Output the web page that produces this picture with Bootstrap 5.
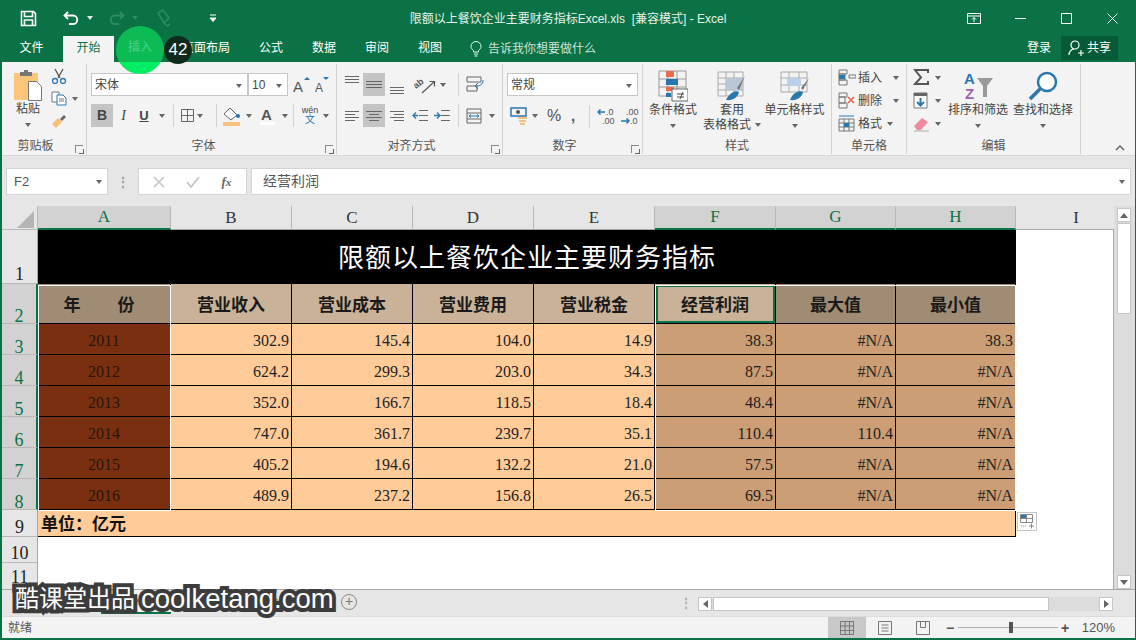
<!DOCTYPE html>
<html lang="zh">
<head>
<meta charset="utf-8">
<title>限额以上餐饮企业主要财务指标Excel.xls - Excel</title>
<link href="https://cdn.jsdelivr.net/npm/bootstrap@5.3.0/dist/css/bootstrap.min.css" rel="stylesheet">
<style>
html, body { height: 640px; overflow: hidden; }
body { font-family: "Liberation Sans", "Noto Sans CJK SC", sans-serif; font-size: 12px; color: #444; background: #e6e6e6; }
.xl-win { width: 1136px; height: 640px; position: relative; border: solid #0a7245; border-width: 0 1px 2px 2px; overflow: hidden; }

/* title bar */
.xl-title { height: 36px; background: #0a7245; color: #e8f3ec; padding-left: 18px; }
.xl-title-text { position: absolute; left: 0; right: 0; top: 10px; text-align: center; line-height: 18px; padding-right: 1px; }
.xl-q-undo { margin-left: 26px; }
.xl-q-caret { margin-left: 7px; }
.xl-q-redo { margin-left: 15px; }
.xl-q-paint { margin-left: 17px; }
.xl-q-more { margin-left: 37px; }
.xl-winbtns { margin-left: auto; }
.xl-winbtn { width: 46px; height: 32px; }

/* tabs */
.xl-tabs { height: 26px; background: #0a7245; color: #fff; }
.xl-tab { height: 26px; line-height: 24px; text-align: center; flex: none; }
.xl-tab-on { background: #f3f3f3; color: #0a7245; }
.xl-tab-file { width: 59px; margin-right: 2px; }
.xl-tab-home { width: 51px; }
.xl-tab-insert { width: 56px; }
.xl-tab-layout { width: 72px; }
.xl-tab-formula { width: 58px; }
.xl-tab-data { width: 48px; }
.xl-tab-review { width: 58px; }
.xl-tab-view { width: 48px; }
.xl-tell { color: #cfe3d7; margin-left: 16px; gap: 6px; }
.xl-login { width: 24px; margin-left: auto; }
.xl-share { width: 57px; height: 24px; background: #075a36; margin: 0 17px 2px 10px; gap: 2px; }

/* ribbon */
.xl-ribbon { height: 94px; background: #f3f3f3; border-bottom: 1px solid #d6d6d6; }
.xl-group { height: 90px; margin-top: 2px; border-right: 1px solid #d2d2d2; position: relative; flex: none; }
.xl-g-clip { width: 85px; padding: 4px 0 0 12px; }
.xl-g-font { width: 250px; padding: 9px 0 0 4px; }
.xl-g-align { width: 166px; padding: 9px 0 0 6px; }
.xl-g-num { width: 140px; padding: 9px 0 0 4px; }
.xl-g-style { width: 189px; padding: 6px 0 0; }
.xl-g-cells { width: 75px; padding: 2px 0 0 6px; }
.xl-g-edit { width: 174px; padding: 2px 0 0 6px; }
.xl-group-name { position: absolute; left: 0; right: 0; bottom: 0; line-height: 16px; text-align: center; color: #555; }
.xl-name-clip { padding-right: 17px; }
.xl-name-launch { padding-right: 16px; }
.xl-launch { position: absolute; right: 3px; bottom: 1px; width: 8px; height: 8px; border: 1px solid #888; border-width: 1px 0 0 1px; }
.xl-launch::after { content: ""; position: absolute; right: -1px; bottom: -1px; width: 5px; height: 5px; border: solid #666; border-width: 0 1px 1px 0; }
.xl-box { height: 23px; background: #fff; border: 1px solid #c6c6c6; color: #444; line-height: 22px; padding-left: 3px; position: relative; flex: none; }
.xl-box-font { width: 157px; }
.xl-box-size { width: 40px; }
.xl-box-num { width: 131px; }
.xl-caret { display: inline-block; width: 0; height: 0; border: 3px solid transparent; border-top: 4px solid #666; border-bottom: 0; flex: none; }
.xl-caret-light { border-top-color: #e4f1ea; }
.xl-caret-dim { border-top-color: #2f8b63; }
.xl-box .xl-caret { position: absolute; right: 5px; top: 10px; }
.xl-row2 { margin-top: 8px; }
.xl-tool { height: 23px; flex: none; }
.xl-tool-on { background: #c4c4c4; }
.xl-vsep { width: 1px; height: 23px; background: #d2d2d2; flex: none; }
.xl-grow-a { margin-left: 5px; gap: 3px; }
.xl-bold-btn { width: 22px; font-size: 14px; }
.xl-ital-btn { width: 21px; font-size: 14px; font-family: "Liberation Serif", serif; }
.xl-under-btn { width: 20px; font-size: 13px; }
.xl-under-caret { width: 19px; padding-left: 5px; }
.xl-border-btn { width: 36px; margin-left: 6px; gap: 1px; }
.xl-fill-btn { width: 35px; margin-left: 6px; gap: 4px; }
.xl-color-btn { width: 35px; gap: 5px; }
.xl-wen-btn { width: 34px; margin-left: 6px; gap: 3px; }
.xl-wen { width: 20px; line-height: 9px; font-size: 9px; text-align: center; }
.xl-wen-zi { color: #2a77ad; font-size: 10px; }
.xl-on-cell { width: 22px; margin-left: 2px; }
.xl-third { margin-left: 3px; }
.xl-orient { width: 45px; margin-left: 7px; gap: 4px; }
.xl-ind1 { margin-left: 5px; }
.xl-ind2 { margin-left: 4px; }
.xl-sep-a { margin-left: 7px; }
.xl-wrap { margin-left: 7px; gap: 7px; }
.xl-cur { width: 40px; padding-left: 3px; gap: 4px; }
.xl-pct-btn { width: 14px; font-size: 16px; color: #555; text-align: center; }
.xl-comma { width: 24px; font-size: 15px; color: #555; text-align: center; }
.xl-sep-n { margin: 0 7px 0 4px; }
.xl-dec2 { margin-left: 3px; }
.xl-big { text-align: center; color: #444; line-height: 15px; flex: none; }
.xl-big svg { display: block; margin: 0 auto 1px; }
.xl-big .xl-caret { display: block; margin: 6px auto 0; }
.xl-big .xl-caret.xl-caret-inl { display: inline-block; margin: 0 0 2px 4px; }
.xl-big-paste { width: 28px; margin-top: 2px; }
.xl-big-cond { width: 60px; }
.xl-big-table { width: 58px; }
.xl-big-cell { width: 67px; }
.xl-big-sort { width: 60px; margin-left: -3px; }
.xl-big-find { width: 60px; margin-left: 5px; }
.xl-clip-side { margin-left: 9px; gap: 7px; }
.xl-clip-copy { gap: 5px; }
.xl-mini { height: 23px; gap: 2px; white-space: nowrap; }
.xl-mini-caret { margin-left: 9px; }
.xl-mini-caret-s { margin-left: 3px; }
.xl-edit-col { width: 38px; }
.xl-edit-col .xl-mini { gap: 5px; }
.xl-ribbon-end { padding-bottom: 4px; margin-right: 10px; }

/* formula bar */
.xl-fbar { height: 50px; background: #e6e6e6; padding: 12px 0 0 4px; }
.xl-fbox { height: 27px; background: #fff; border: 1px solid #d4d4d4; flex: none; position: relative; }
.xl-namebox { width: 102px; padding-left: 7px; line-height: 25px; font-size: 13px; color: #555; }
.xl-namebox .xl-caret, .xl-formula .xl-caret { position: absolute; right: 5px; top: 11px; }
.xl-dots { width: 30px; color: #999; flex: none; font-weight: 700; line-height: 1; }
.xl-fx { width: 109px; padding: 0 4px; }
.xl-fx-label { font-family: "Liberation Serif", serif; color: #666; font-size: 13px; }
.xl-formula { flex: 1; margin: 0 4px; line-height: 25px; padding-left: 11px; font-size: 14px; color: #555; }

/* grid */
.xl-sheet-area { height: 383px; }
.xl-grid-wrap { width: 1112px; height: 383px; overflow: hidden; background: #e6e6e6; flex: none; }
.xl-grid { table-layout: fixed; width: 1112px; border-collapse: separate; border-spacing: 0; font-family: "Liberation Serif", "Noto Sans CJK SC", serif; }
.xl-grid td, .xl-grid th { padding: 0; white-space: nowrap; }
.xl-c-rh { width: 36px; }
.xl-c-a { width: 133px; }
.xl-c-m { width: 121px; }
.xl-c-s { width: 120px; }
.xl-c-i { width: 98px; }
.xl-ch { height: 24px; background: #e6e6e6; color: #333; font-weight: 400; font-size: 17px; line-height: 20px; text-align: center; border-right: 1px solid #b8b8b8; border-bottom: 1px solid #a6a6a6; }
.xl-ch-on { background: #d2d2d2; color: #0a7245; border-bottom: 2px solid #0a7245; }
.xl-grid .xl-ch-last { border-right: 0; padding-left: 22px; }
.xl-rh { background: #e6e6e6; color: #222; font-size: 18px; font-weight: 400; line-height: 18px; text-align: center; vertical-align: bottom; border-bottom: 1px solid #b8b8b8; border-right: 1px solid #a6a6a6; }
.xl-rh-on { background: #d2d2d2; color: #0a7245; border-right: 2px solid #0a7245; line-height: 14px; }
.xl-grid .xl-rh-last { padding-bottom: 3px; }
.xl-r-title { height: 54px; }
.xl-r-head { height: 40px; }
.xl-r-data { height: 31px; }
.xl-r-unit { height: 26px; }
.xl-r-last { height: 27px; }
.xl-corner { background: #e6e6e6; border-right: 1px solid #b8b8b8; border-bottom: 1px solid #b8b8b8; }
.xl-corner-tri { display: block; margin: 4px 3px 0 auto; width: 0; height: 0; border-style: solid; border-width: 0 0 17px 17px; border-color: transparent transparent #b4b4b4 transparent; }
.xl-grid .xl-banner { background: #000; color: #fff; text-align: center; font-family: "Noto Sans CJK SC", sans-serif; font-size: 26px; letter-spacing: 1px; padding-bottom: 4px; }
.xl-head { font-family: "Noto Sans CJK SC", sans-serif; font-weight: 700; font-size: 17px; color: #1a1a1a; text-align: center; background: #c9b297; border-right: 1px solid #000; border-bottom: 1px solid #000; }
.xl-head-dark { background: #a08c74; }
.xl-head-sel { outline: 2px solid #0a7245; outline-offset: -3px; }
.xl-grid .xl-head-year { padding-right: 10px; }
.xl-year-gap { display: inline-block; width: 37px; }
.xl-grid .xl-num { font-size: 16px; color: #222; text-align: right; padding: 3px 2px 0 0; background: #ffcc99; border-right: 1px solid #000; border-bottom: 1px solid #000; }
.xl-grid .xl-year { background: #7a3010; text-align: center; padding-right: 0; color: #2a1508; }
.xl-grid .xl-tan { background: #cc9e76; }
.xl-grid .xl-unit { background: #ffcc99; font-family: "Noto Sans CJK SC", sans-serif; font-weight: 700; font-size: 17px; color: #111; padding-left: 3px; border-bottom: 1px solid #000; border-right: 1px solid #000; }
.xl-white { background: #fff; border-right: 1px solid #a8a8a8; }
.xl-ants { position: absolute; top: 79px; height: 226px; border: 1px solid #fff; pointer-events: none; }
.xl-ants-a { left: 36px; width: 133px; }
.xl-ants-f { left: 653px; width: 361px; }
.xl-paste-opt { position: absolute; left: 1015px; top: 306px; width: 20px; height: 19px; background: #fff; border: 1px solid #c6c6c6; }
.xl-paste-opt svg { display: block; margin: 1px 0 0 2px; }
.xl-vscroll { width: 21px; padding: 2px 4px 0 3px; background: #dcdcdc; flex: none; }
.xl-sbtn { background: #fff; border: 1px solid #c6c6c6; flex: none; }
.xl-vs-btn { width: 14px; height: 14px; }
.xl-vs-thumb { width: 14px; height: 91px; margin-top: 1px; }
.xl-up { width: 0; height: 0; border: 4px solid transparent; border-bottom: 5px solid #666; border-top: 0; }
.xl-down { width: 0; height: 0; border: 4px solid transparent; border-top: 5px solid #666; border-bottom: 0; }
.xl-left { width: 0; height: 0; border: 4px solid transparent; border-right: 5px solid #666; border-left: 0; }
.xl-right { width: 0; height: 0; border: 4px solid transparent; border-left: 5px solid #666; border-right: 0; }

/* sheet tabs */
.xl-sheetbar { height: 27px; background: #e6e6e6; border-top: 1px solid #a8a8a8; position: relative; }
.xl-sheet-tabs { padding-left: 99px; height: 26px; color: #777; }
.xl-sheet-tab { width: 70px; height: 24px; line-height: 22px; text-align: center; flex: none; }
.xl-sheet-on { border-bottom: 2px solid #0a7245; color: #0a7245; background: #f3f3f3; }
.xl-add { width: 16px; height: 16px; border: 1px solid #888; border-radius: 50%; color: #777; line-height: 13px; text-align: center; font-size: 14px; margin: 4px 0 0 30px; flex: none; }
.xl-hgrip { position: absolute; left: 678px; top: 8px; color: #aaa; line-height: 11px; font-size: 12px; font-weight: 700; }
.xl-hscroll { position: absolute; left: 696px; top: 7px; width: 415px; height: 14px; background: #dcdcdc; }
.xl-hs-btn { width: 14px; height: 14px; }
.xl-hs-thumb { width: 336px; height: 14px; margin-left: 1px; }

/* status bar */
.xl-status { height: 22px; background: #f3f3f3; border-top: 1px solid #dcdcdc; padding-left: 6px; color: #555; }
.xl-viewbtn { width: 38px; height: 21px; flex: none; }
.xl-view-on { background: #c8c8c8; }
.xl-zoom-sign { font-size: 14px; line-height: 1; width: 8px; text-align: center; }
.xl-zoom-minus { margin-left: 4px; }
.xl-zoom { width: 100px; height: 1px; background: #b0b0b0; position: relative; margin: 0 3px 0 4px; }
.xl-zoom-knob { position: absolute; left: 51px; top: -5px; width: 4px; height: 11px; background: #555; }
.xl-pct { width: 46px; font-size: 13px; color: #555; margin-right: 20px; text-align: right; }

/* overlays */
.xl-click { position: absolute; left: 114px; top: 26px; width: 48px; height: 48px; border-radius: 50%; background: linear-gradient(#0dbb55 0, #0dbb55 75%, #00ef62 75%); text-align: center; line-height: 42px; color: #4fd08f; }
.xl-count { position: absolute; left: 162px; top: 36px; width: 28px; height: 28px; border-radius: 50%; background: #0e2a1c; color: #fff; text-align: center; line-height: 28px; font-size: 17px; }
.xl-watermark { position: absolute; left: 13px; top: 583px; font-size: 24px; line-height: 32px; color: #fff; white-space: nowrap; -webkit-text-stroke: 8px #3c3c3c; paint-order: stroke fill; gap: 6px; }
.xl-watermark-en { font-size: 27.500px; }
</style>
</head>
<body>
<div class="xl-win">

  <!-- title bar -->
  <div class="xl-title d-flex align-items-center position-relative">
    <div class="xl-title-text">限额以上餐饮企业主要财务指标Excel.xls&nbsp; [兼容模式] - Excel</div>
    <div class="d-flex align-items-center position-relative">
      <svg width="17" height="17" viewBox="0 0 17 17"><path d="M1.500 1.500h12l2 2v12h-14z" fill="none" stroke="#fff" stroke-width="1.600"/><path d="M4.500 2v4.500h8V2M4.500 15v-5h8v5" fill="none" stroke="#fff" stroke-width="1.600"/></svg>
      <svg class="xl-q-undo" width="17" height="16" viewBox="0 0 17 16"><path d="M5 2L1.500 5.500 5 9M2 5.500h8a4.200 4.200 0 0 1 0 8.500H6" fill="none" stroke="#fff" stroke-width="1.800"/></svg>
      <span class="xl-caret xl-caret-light xl-q-caret"></span>
      <svg class="xl-q-redo" width="17" height="16" viewBox="0 0 17 16"><path d="M12 2l3.500 3.500L12 9M15 5.500H7a4.200 4.200 0 0 0 0 8.500h4" fill="none" stroke="#2f8b63" stroke-width="1.800"/></svg>
      <span class="xl-caret xl-caret-dim xl-q-caret"></span>
      <svg class="xl-q-paint" width="17" height="20" viewBox="0 0 17 20"><path d="M3 5l5-3 6 8-5 5zM9 15l3 3 3-2" fill="none" stroke="#2f8b63" stroke-width="1.600"/></svg>
      <svg class="xl-q-more" width="8" height="8" viewBox="0 0 8 8"><path d="M1 1h6M1 4h6L4 7.500z" fill="#fff" stroke="#fff"/></svg>
    </div>
    <div class="xl-winbtns d-flex align-items-center position-relative">
      <div class="xl-winbtn d-flex align-items-center justify-content-center"><svg width="14" height="11" viewBox="0 0 14 11"><path d="M.5.500h13v10H.5zM.5 3h13M7 9V4.500M5 6.500l2-2 2 2" fill="none" stroke="#fff"/></svg></div>
      <div class="xl-winbtn d-flex align-items-center justify-content-center"><svg width="11" height="11" viewBox="0 0 11 11"><path d="M0 5.500h11" stroke="#fff"/></svg></div>
      <div class="xl-winbtn d-flex align-items-center justify-content-center"><svg width="11" height="11" viewBox="0 0 11 11"><path d="M.5.500h10v10H.5z" fill="none" stroke="#fff"/></svg></div>
      <div class="xl-winbtn d-flex align-items-center justify-content-center"><svg width="11" height="11" viewBox="0 0 11 11"><path d="M.5.500l10 10M10.500.500l-10 10" stroke="#fff"/></svg></div>
    </div>
  </div>

  <!-- tabs -->
  <div class="xl-tabs d-flex align-items-end">
    <div class="xl-tab xl-tab-file">文件</div>
    <div class="xl-tab xl-tab-home xl-tab-on">开始</div>
    <div class="xl-tab xl-tab-insert"></div>
    <div class="xl-tab xl-tab-layout">页面布局</div>
    <div class="xl-tab xl-tab-formula">公式</div>
    <div class="xl-tab xl-tab-data">数据</div>
    <div class="xl-tab xl-tab-review">审阅</div>
    <div class="xl-tab xl-tab-view">视图</div>
    <div class="xl-tab xl-tell d-flex align-items-center">
      <svg width="12" height="16" viewBox="0 0 12 16"><path d="M3.500 11V9.500C1.500 8 1 6.500 1 5.500a5 5 0 0 1 10 0c0 1-.5 2.500-2.500 4V11zM4 13h4M4.500 15h3" fill="none" stroke="#dfe"/></svg>
      告诉我你想要做什么
    </div>
    <div class="xl-tab xl-login">登录</div>
    <div class="xl-share d-flex align-items-center justify-content-center">
      <svg width="17" height="16" viewBox="0 0 17 16"><circle cx="7" cy="5" r="4" fill="none" stroke="#fff" stroke-width="1.200"/><path d="M1 15c0-3 2-6 5-6M10 13h6M13 10v6" fill="none" stroke="#fff" stroke-width="1.200"/></svg>
      共享
    </div>
  </div>

  <!-- ribbon -->
  <div class="xl-ribbon d-flex">
    <!-- clipboard -->
    <div class="xl-group xl-g-clip">
      <div class="d-flex">
        <div class="xl-big xl-big-paste">
          <svg width="28" height="31" viewBox="0 0 28 31"><path d="M0 3h24v27H0z" fill="#fbc57c"/><path d="M6 2h12v4H6z" fill="#777"/><path d="M10 0h4v3h-4z" fill="#777"/><path d="M14.500 11.500h8l5 5v14h-13z" fill="#fff" stroke="#777"/></svg>
          <div>粘贴</div>
          <span class="xl-caret"></span>
        </div>
        <div class="xl-clip-side d-flex flex-column">
          <svg width="16" height="16" viewBox="0 0 16 16"><path d="M4 1l5 9M12 1L7 10" stroke="#555" stroke-width="1.300"/><circle cx="4" cy="13" r="2.500" fill="none" stroke="#2a77ad" stroke-width="1.300"/><circle cx="12" cy="13" r="2.500" fill="none" stroke="#2a77ad" stroke-width="1.300"/></svg>
          <div class="xl-clip-copy d-flex align-items-center"><svg width="16" height="15" viewBox="0 0 16 15"><path d="M1 1h7v10H1z" fill="#fff" stroke="#777"/><path d="M6 4h6l3 3v7H6z" fill="#fff" stroke="#2a77ad"/><path d="M8 8h5M8 10h5" stroke="#777"/></svg><span class="xl-caret"></span></div>
          <svg width="16" height="16" viewBox="0 0 16 16"><path d="M1 11l6-6 4 4-6 6z" fill="#f9bf76"/><path d="M9 6l4-4 2 2-4 4z" fill="#666"/></svg>
        </div>
      </div>
      <div class="xl-group-name xl-name-clip">剪贴板</div><span class="xl-launch"></span>
    </div>
    <!-- font -->
    <div class="xl-group xl-g-font">
      <div class="d-flex align-items-center">
        <div class="xl-box xl-box-font">宋体<span class="xl-caret"></span></div>
        <div class="xl-box xl-box-size">10<span class="xl-caret"></span></div>
        <div class="xl-tool xl-grow-a d-flex align-items-center">
          <svg width="18" height="18" viewBox="0 0 18 18"><text x="0" y="16" font-family="Liberation Sans" font-size="15" fill="#555">A</text><path d="M11 4l3-3 3 3z" fill="#2a77ad"/></svg>
          <svg width="16" height="18" viewBox="0 0 16 18"><text x="1" y="16" font-family="Liberation Sans" font-size="12" fill="#555">A</text><path d="M9 1h6l-3 3z" fill="#2a77ad"/></svg>
        </div>
      </div>
      <div class="xl-row2 d-flex align-items-center">
        <div class="xl-tool xl-tool-on xl-bold-btn d-flex align-items-center justify-content-center fw-bold">B</div>
        <div class="xl-tool xl-ital-btn d-flex align-items-center justify-content-center fst-italic">I</div>
        <div class="xl-tool xl-under-btn d-flex align-items-center justify-content-center fw-bold text-decoration-underline">U</div>
        <div class="xl-tool xl-under-caret d-flex align-items-center"><span class="xl-caret"></span></div>
        <div class="xl-vsep"></div>
        <div class="xl-tool xl-border-btn d-flex align-items-center">
          <svg width="16" height="16" viewBox="0 0 16 16"><path d="M1.500 1.500h12v12h-12zM7.500 1.500v12M1.500 7.500h12" fill="none" stroke="#666"/></svg><span class="xl-caret"></span></div>
        <div class="xl-vsep"></div>
        <div class="xl-tool xl-fill-btn d-flex align-items-center">
          <svg width="19" height="20" viewBox="0 0 19 20"><path d="M1 8l6-6 7 7-6 5z" fill="#fff" stroke="#666"/><circle cx="15" cy="10" r="2" fill="#2a77ad"/><path d="M0 16h17v4H0z" fill="#f9c27a"/></svg><span class="xl-caret"></span></div>
        <div class="xl-tool xl-color-btn d-flex align-items-center">
          <svg width="19" height="20" viewBox="0 0 19 20"><text x="3" y="14" font-family="Liberation Sans" font-weight="700" font-size="15" fill="#555">A</text><path d="M2 16h15v3H2z" fill="#fff"/></svg><span class="xl-caret"></span></div>
        <div class="xl-vsep"></div>
        <div class="xl-tool xl-wen-btn d-flex align-items-center">
          <div class="xl-wen">wén<br><span class="xl-wen-zi">文</span></div><span class="xl-caret"></span></div>
      </div>
      <div class="xl-group-name xl-name-launch">字体</div><span class="xl-launch"></span>
    </div>
    <!-- alignment -->
    <div class="xl-group xl-g-align">
      <div class="d-flex align-items-center">
        <svg width="18" height="23" viewBox="0 0 18 23"><path d="M2 3.500h14M2 6.500h14M2 9.500h14" stroke="#666"/></svg>
        <div class="xl-tool xl-tool-on xl-on-cell d-flex align-items-center"><svg width="22" height="23" viewBox="0 0 22 23"><path d="M3 8.500h16M3 11.500h16M3 14.500h16" stroke="#666"/></svg></div>
        <svg class="xl-third" width="18" height="23" viewBox="0 0 18 23"><path d="M2 14.500h14M2 17.500h14M2 20.500h14" stroke="#666"/></svg>
        <div class="xl-orient d-flex align-items-center"><svg width="23" height="20" viewBox="0 0 23 20"><text transform="translate(3 14) rotate(-38)" font-family="Liberation Sans" font-weight="700" font-size="9" fill="#555">ab</text><path d="M9 18L21 7M16.500 6.500H21.500V11.500" fill="none" stroke="#555" stroke-width="1.200"/></svg><span class="xl-caret"></span></div>
        <div class="xl-vsep"></div>
        <svg class="xl-wrap" width="18" height="20" viewBox="0 0 18 20"><path d="M1 2h14v5H1zM1 11h10v5H1z" fill="none" stroke="#666"/><path d="M17 5c0 5-3 6-8 6M12 8l-3 3 3 3" fill="none" stroke="#2a77ad"/></svg>
      </div>
      <div class="xl-row2 d-flex align-items-center">
        <svg width="18" height="23" viewBox="0 0 18 23"><path d="M2 7.500h14M2 10.500h10M2 13.500h14M2 16.500h10" stroke="#666"/></svg>
        <div class="xl-tool xl-tool-on xl-on-cell d-flex align-items-center"><svg width="22" height="23" viewBox="0 0 22 23"><path d="M3 7.500h16M6 10.500h10M3 13.500h16M6 16.500h10" stroke="#666"/></svg></div>
        <svg class="xl-third" width="18" height="23" viewBox="0 0 18 23"><path d="M2 7.500h14M6 10.500h10M2 13.500h14M6 16.500h10" stroke="#666"/></svg>
        <svg class="xl-ind1" width="18" height="23" viewBox="0 0 18 23"><path d="M8 6.500h9M8 11.500h9M8 16.500h9" stroke="#666"/><path d="M7 11.500H2M5 8.500l-3 3 3 3" fill="none" stroke="#2a77ad" stroke-width="1.300"/></svg>
        <svg class="xl-ind2" width="18" height="23" viewBox="0 0 18 23"><path d="M8 6.500h9M8 11.500h9M8 16.500h9" stroke="#666"/><path d="M1 11.500h5M4 8.500l3 3-3 3" fill="none" stroke="#2a77ad" stroke-width="1.300"/></svg>
        <div class="xl-vsep xl-sep-a"></div>
        <div class="xl-wrap d-flex align-items-center"><svg width="16" height="16" viewBox="0 0 16 16"><path d="M1 1h14v14H1zM1 5h14M1 11h14" fill="none" stroke="#666"/><path d="M3 8h10M5 6.500L3 8l2 1.500M11 6.500L13 8l-2 1.500" fill="none" stroke="#2a77ad"/></svg><span class="xl-caret"></span></div>
      </div>
      <div class="xl-group-name xl-name-launch">对齐方式</div><span class="xl-launch"></span>
    </div>
    <!-- number -->
    <div class="xl-group xl-g-num">
      <div class="xl-box xl-box-num">常规<span class="xl-caret"></span></div>
      <div class="xl-row2 d-flex align-items-center">
        <div class="xl-cur d-flex align-items-center"><svg width="18" height="18" viewBox="0 0 18 18"><path d="M1 1h15v8H1z" fill="none" stroke="#2a77ad" stroke-width="1.500"/><circle cx="8" cy="5" r="2" fill="#555"/><path d="M8 11h9M9 14h7M10 17h5" stroke="#f3b25f" stroke-width="1.500"/></svg><span class="xl-caret"></span></div>
        <div class="xl-pct-btn">%</div>
        <div class="xl-comma fw-bold">,</div>
        <div class="xl-vsep xl-sep-n"></div>
        <svg width="20" height="18" viewBox="0 0 20 18"><text x="9" y="8" font-size="9" font-family="Liberation Sans" fill="#555">.0</text><text x="5" y="17" font-size="9" font-family="Liberation Sans" fill="#555">.00</text><path d="M8 5H1M3.500 2.500L1 5l2.500 2.500" fill="none" stroke="#2a77ad" stroke-width="1.500"/></svg>
        <svg class="xl-dec2" width="20" height="18" viewBox="0 0 20 18"><text x="6" y="8" font-size="9" font-family="Liberation Sans" fill="#555">.00</text><text x="10" y="17" font-size="9" font-family="Liberation Sans" fill="#555">.0</text><path d="M1 14h8M6.500 11.500L9 14l-2.500 2.500" fill="none" stroke="#2a77ad" stroke-width="1.500"/></svg>
      </div>
      <div class="xl-group-name xl-name-launch">数字</div><span class="xl-launch"></span>
    </div>
    <!-- styles -->
    <div class="xl-group xl-g-style d-flex">
      <div class="xl-big xl-big-cond">
        <svg width="30" height="32" viewBox="0 0 30 32"><path d="M1 1h27v25H1zM10 1v25M19 1v25M1 9h27M1 17h27" fill="none" stroke="#999"/><path d="M8 1h8v6H8z" fill="#ee6a4d"/><path d="M8 9h12v6H8z" fill="#2a77ad"/><path d="M8 17h8v4H8z" fill="#ee6a4d"/><path d="M8 23h5v4H8z" fill="#2a77ad"/><path d="M14 19h16v12H14z" fill="#fff" stroke="#666"/><path d="M19 24h7M19 27h7M25 22l-3 7" stroke="#444"/></svg>
        <div>条件格式</div><span class="xl-caret"></span>
      </div>
      <div class="xl-big xl-big-table">
        <svg width="30" height="32" viewBox="0 0 30 32"><path d="M1 2h25v24H1zM9 2v24M17 2v24M1 8h25M1 14h25M1 20h25" fill="none" stroke="#aaa"/><path d="M9 8h16v12H9z" fill="#b8c8d8"/><path d="M28 6l-8 12 2 2z" fill="#777"/><path d="M9 30c4-8 10-10 13-8-1 5-6 9-13 8z" fill="#2a77ad"/></svg>
        <div>套用</div><div class="text-nowrap">表格格式<span class="xl-caret xl-caret-inl"></span></div>
      </div>
      <div class="xl-big xl-big-cell">
        <svg width="32" height="32" viewBox="0 0 32 32"><path d="M2 2h26v20H2zM2 8h26M2 15h26M10 2v20M20 2v20" fill="none" stroke="#aaa"/><path d="M8 8h14v8H8z" fill="#b8d0e8"/><path d="M30 8l-8 10 2 2z" fill="#777"/><path d="M11 30c3-8 10-10 13-8-1 5-6 9-13 8z" fill="#2a77ad"/></svg>
        <div class="text-nowrap">单元格样式</div><span class="xl-caret"></span>
      </div>
      <div class="xl-group-name">样式</div>
    </div>
    <!-- cells -->
    <div class="xl-group xl-g-cells">
      <div class="xl-mini d-flex align-items-center"><svg width="18" height="17" viewBox="0 0 18 17"><path d="M1 1h8v4H1zM1 11h8v5H1zM1 5h6v6H1zM11 6h7v3h-7z" fill="none" stroke="#777"/><path d="M1 6h6v4H1z" fill="#2a77ad"/></svg><span>插入</span><span class="xl-caret xl-mini-caret"></span></div>
      <div class="xl-mini d-flex align-items-center"><svg width="18" height="17" viewBox="0 0 18 17"><path d="M1 1h8v4H1zM1 11h8v5H1zM1 5h6v6H1z" fill="none" stroke="#777"/><path d="M10 5l6 6M16 5l-6 6" stroke="#e8623e" stroke-width="1.500"/></svg><span>删除</span><span class="xl-caret xl-mini-caret"></span></div>
      <div class="xl-mini d-flex align-items-center"><svg width="18" height="17" viewBox="0 0 18 17"><path d="M1 4h15v12H1zM1 8h15M1 12h15M6 4v12M11 4v12" fill="none" stroke="#777"/><path d="M1 1h15" stroke="#2a77ad"/><path d="M6 8h5v4H6z" fill="#2a77ad"/></svg><span>格式</span><span class="xl-caret xl-mini-caret-s"></span></div>
      <div class="xl-group-name">单元格</div>
    </div>
    <!-- editing -->
    <div class="xl-group xl-g-edit d-flex">
      <div class="xl-edit-col">
        <div class="xl-mini d-flex align-items-center"><svg width="17" height="17" viewBox="0 0 17 17"><path d="M15 4V1H2l6 7.500L2 15h13v-3" fill="none" stroke="#555" stroke-width="2"/></svg><span class="xl-caret"></span></div>
        <div class="xl-mini d-flex align-items-center"><svg width="17" height="17" viewBox="0 0 17 17"><path d="M1 1h13v15H1z" fill="#fff" stroke="#777"/><path d="M1 1h13v3H1z" fill="#666"/><path d="M7.500 6v7M4 10l3.500 3.500L11 10" fill="none" stroke="#2a77ad" stroke-width="2"/></svg><span class="xl-caret"></span></div>
        <div class="xl-mini d-flex align-items-center"><svg width="17" height="17" viewBox="0 0 17 17"><path d="M1 11l8-8 6 4-7 8H4z" fill="#f08a9c"/><path d="M1 16h15" stroke="#aaa"/></svg><span class="xl-caret"></span></div>
      </div>
      <div class="xl-big xl-big-sort pt-1">
        <svg width="32" height="32" viewBox="0 0 32 32"><text x="2" y="14" font-family="Liberation Sans" font-weight="700" font-size="15" fill="#2a77ad">A</text><text x="3" y="29" font-family="Liberation Sans" font-weight="700" font-size="15" fill="#a05fb0">Z</text><path d="M15 8h16l-6 8v11h-4V16z" fill="#999"/></svg>
        <div class="text-nowrap">排序和筛选</div><span class="xl-caret"></span>
      </div>
      <div class="xl-big xl-big-find pt-1">
        <svg width="32" height="32" viewBox="0 0 32 32"><circle cx="20" cy="12" r="9" fill="#fff" stroke="#2a77ad" stroke-width="2.500"/><path d="M13 19L3 29" stroke="#2a77ad" stroke-width="3.500"/></svg>
        <div class="text-nowrap">查找和选择</div><span class="xl-caret"></span>
      </div>
      <div class="xl-group-name">编辑</div>
    </div>
    <div class="xl-ribbon-end flex-grow-1 d-flex align-items-end justify-content-end">
      <svg width="10" height="6" viewBox="0 0 10 6"><path d="M1 5l4-4 4 4" fill="none" stroke="#666" stroke-width="1.500"/></svg>
    </div>
  </div>

  <!-- formula bar -->
  <div class="xl-fbar d-flex align-items-start">
    <div class="xl-fbox xl-namebox">F2<span class="xl-caret"></span></div>
    <div class="xl-dots d-flex align-items-center justify-content-center pt-2">⋮</div>
    <div class="xl-fbox xl-fx d-flex align-items-center justify-content-around">
      <svg width="12" height="12" viewBox="0 0 12 12"><path d="M1 1l10 10M11 1L1 11" stroke="#c4c4c4" stroke-width="1.600"/></svg>
      <svg width="14" height="12" viewBox="0 0 14 12"><path d="M1 6l4 5 8-10" fill="none" stroke="#c4c4c4" stroke-width="1.800"/></svg>
      <span class="xl-fx-label fst-italic fw-bold">f<small>x</small></span>
    </div>
    <div class="xl-fbox xl-formula">经营利润<span class="xl-caret"></span></div>
  </div>

  <!-- grid -->
  <div class="xl-sheet-area d-flex position-relative">
    <div class="xl-grid-wrap">
      <table class="xl-grid" id="xlGrid"></table>
    </div>
    <div class="xl-vscroll d-flex flex-column">
      <div class="xl-sbtn xl-vs-btn d-flex align-items-center justify-content-center"><span class="xl-up"></span></div>
      <div class="xl-sbtn xl-vs-thumb"></div>
      <div class="xl-sbtn xl-vs-btn d-flex align-items-center justify-content-center mt-auto"><span class="xl-down"></span></div>
    </div>
    <span class="xl-ants xl-ants-a"></span>
    <span class="xl-ants xl-ants-f"></span>
    <div class="xl-paste-opt">
      <svg width="17" height="17" viewBox="0 0 17 17"><path d="M.5.500h12v8H.5zM6.500.500v8M.5 4.500h12" fill="none" stroke="#888"/><path d="M1 1h5v3H1z" fill="#2a77ad"/><path d="M1 12h6" stroke="#888" stroke-dasharray="1 1"/><path d="M9 12h5M11.500 9.500v5" stroke="#888"/></svg>
    </div>
  </div>

  <!-- sheet tabs + scrollbar -->
  <div class="xl-sheetbar">
    <div class="xl-sheet-tabs d-flex align-items-start">
      <div class="xl-sheet-tab xl-sheet-on">Sheet1</div>
      <div class="xl-sheet-tab">Sheet2</div>
      <div class="xl-sheet-tab">Sheet3</div>
      <div class="xl-add">+</div>
    </div>
    <div class="xl-hgrip">⋮</div>
    <div class="xl-hscroll d-flex">
      <div class="xl-sbtn xl-hs-btn d-flex align-items-center justify-content-center"><span class="xl-left"></span></div>
      <div class="xl-sbtn xl-hs-thumb"></div>
      <div class="xl-sbtn xl-hs-btn d-flex align-items-center justify-content-center ms-auto"><span class="xl-right"></span></div>
    </div>
  </div>

  <!-- status bar -->
  <div class="xl-status d-flex align-items-center">
    <span>就绪</span>
    <div class="ms-auto d-flex align-items-center">
      <div class="xl-viewbtn xl-view-on d-flex align-items-center justify-content-center"><svg width="14" height="14" viewBox="0 0 14 14"><path d="M.5.500h13v13H.5zM5 .5v13M9.500.5v13M.5 5h13M.5 9.500h13" fill="none" stroke="#777"/></svg></div>
      <div class="xl-viewbtn d-flex align-items-center justify-content-center"><svg width="14" height="14" viewBox="0 0 14 14"><path d="M.5.500h13v13H.5zM3.500 4h7M3.500 7h7M3.500 10h7" fill="none" stroke="#777"/></svg></div>
      <div class="xl-viewbtn d-flex align-items-center justify-content-center"><svg width="14" height="14" viewBox="0 0 14 14"><path d="M.5.500h13v13H.5zM4.500.5v6h5v-6" fill="none" stroke="#777"/></svg></div>
      <span class="xl-zoom-sign xl-zoom-minus fw-bold">−</span>
      <div class="xl-zoom"><span class="xl-zoom-knob"></span></div>
      <span class="xl-zoom-sign fw-bold">+</span>
      <div class="xl-pct">120%</div>
    </div>
  </div>

  <!-- click marker, counter and watermark lie over the window -->
  <div class="xl-click">插入</div>
  <div class="xl-count">42</div>
  <div class="xl-watermark d-flex"><span>酷课堂出品</span><span class="xl-watermark-en">coolketang.com</span></div>
</div>

<script src="https://cdn.jsdelivr.net/npm/bootstrap@5.3.0/dist/js/bootstrap.bundle.min.js"></script>
<script>
    // sheet data
    const colClasses = ['xl-c-rh', 'xl-c-a', 'xl-c-m', 'xl-c-m', 'xl-c-m', 'xl-c-m', 'xl-c-m', 'xl-c-s', 'xl-c-s', 'xl-c-i'];
    const colNames = ['A', 'B', 'C', 'D', 'E', 'F', 'G', 'H', 'I'];
    const selectedCols = ['A', 'F', 'G', 'H'];
    const heads = ['年<span class="xl-year-gap"></span>份', '营业收入', '营业成本', '营业费用', '营业税金', '经营利润', '最大值', '最小值'];
    const rows = [
        ['2011', '302.9', '145.4', '104.0', '14.9', '38.3', '#N/A', '38.3'],
        ['2012', '624.2', '299.3', '203.0', '34.3', '87.5', '#N/A', '#N/A'],
        ['2013', '352.0', '166.7', '118.5', '18.4', '48.4', '#N/A', '#N/A'],
        ['2014', '747.0', '361.7', '239.7', '35.1', '110.4', '110.4', '#N/A'],
        ['2015', '405.2', '194.6', '132.2', '21.0', '57.5', '#N/A', '#N/A'],
        ['2016', '489.9', '237.2', '156.8', '26.5', '69.5', '#N/A', '#N/A']
    ];

    function rowHead(n, heightClass, on) {
        return `<th class="xl-rh ${heightClass} ${on ? 'xl-rh-on' : ''}">${n}</th>`;
    }

    function renderGrid() {
        let html = '<colgroup>' + colClasses.map(c => `<col class="${c}">`).join('') + '</colgroup>';

        html += '<tr><th class="xl-corner"><span class="xl-corner-tri"></span></th>';
        colNames.forEach(c => {
            const on = selectedCols.includes(c) ? 'xl-ch-on' : '';
            const last = c === 'I' ? 'xl-ch-last' : '';
            html += `<th class="xl-ch ${on} ${last}">${c}</th>`;
        });
        html += '</tr>';

        html += `<tr>${rowHead(1, 'xl-r-title', false)}<td colspan="8" class="xl-banner">限额以上餐饮企业主要财务指标</td><td class="xl-white"></td></tr>`;

        html += `<tr>${rowHead(2, 'xl-r-head', true)}`;
        heads.forEach((t, i) => {
            const dark = i === 0 || i >= 6 ? 'xl-head-dark' : '';
            const sel = i === 5 ? 'xl-head-sel' : '';
            const year = i === 0 ? 'xl-head-year' : '';
            html += `<td class="xl-head ${dark} ${sel} ${year}">${t}</td>`;
        });
        html += '<td class="xl-white"></td></tr>';

        rows.forEach((r, idx) => {
            html += `<tr>${rowHead(idx + 3, 'xl-r-data', true)}`;
            r.forEach((v, i) => {
                const cls = i === 0 ? 'xl-year' : (i >= 5 ? 'xl-tan' : '');
                html += `<td class="xl-num ${cls}">${v}</td>`;
            });
            html += '<td class="xl-white"></td></tr>';
        });

        html += `<tr>${rowHead(9, 'xl-r-unit', false)}<td colspan="8" class="xl-unit">单位&#xFF1A;亿元</td><td class="xl-white"></td></tr>`;
        html += `<tr>${rowHead(10, 'xl-r-unit', false)}<td colspan="9" class="xl-white"></td></tr>`;
        html += `<tr>${rowHead(11, 'xl-r-last xl-rh-last', false)}<td colspan="9" class="xl-white"></td></tr>`;

        document.getElementById('xlGrid').innerHTML = html;
    }

    renderGrid();
</script>
</body>
</html>
